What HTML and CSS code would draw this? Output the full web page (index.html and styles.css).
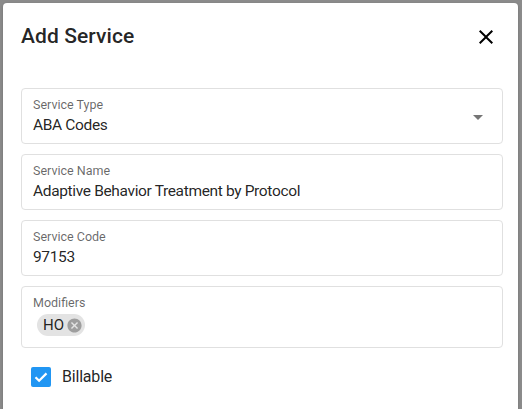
FILE: index.html
```html
<!DOCTYPE html>
<html lang="en">
<head>
<meta charset="utf-8">
<title>Add Service</title>
<link rel="stylesheet" href="styles.css">
</head>
<body>
<div class="dialog">
  <div class="header">
    <h2 class="title">Add Service</h2>
    <button class="close" aria-label="Close">
      <svg viewBox="0 0 24 24" width="24" height="24"><path d="M19 6.41 17.59 5 12 10.59 6.41 5 5 6.41 10.59 12 5 17.59 6.41 19 12 13.41 17.59 19 19 17.59 13.41 12z" fill="#000"/></svg>
    </button>
  </div>
  <div class="fields">
    <div class="field select">
      <div class="field-body">
        <div class="label">Service Type</div>
        <div class="value">ABA Codes</div>
      </div>
      <svg class="arrow" viewBox="0 0 10 5" width="10" height="5"><path d="M0 0h10L5 5z" fill="#757575"/></svg>
    </div>
    <div class="field">
      <div class="field-body">
        <div class="label">Service Name</div>
        <div class="value">Adaptive Behavior Treatment by Protocol</div>
      </div>
    </div>
    <div class="field">
      <div class="field-body">
        <div class="label">Service Code</div>
        <div class="value">97153</div>
      </div>
    </div>
    <div class="field modifiers">
      <div class="field-body">
        <div class="label">Modifiers</div>
        <div class="chips">
          <span class="chip">HO
            <svg class="chip-del" viewBox="0 0 24 24" width="17" height="17"><path d="M12 2C6.470 2 2 6.47 2 12s4.47 10 10 10 10-4.47 10-10S17.53 2 12 2zm5 13.59L15.590 17 12 13.41 8.41 17 7 15.59 10.59 12 7 8.41 8.41 7 12 10.59 15.59 7 17 8.41 13.41 12 17 15.59z" fill="#9e9e9e"/></svg>
          </span>
        </div>
      </div>
    </div>
    <label class="check-row">
      <span class="checkbox">
        <svg viewBox="0 0 20 20" width="20" height="20"><path d="M4.5 10.2l3.6 3.6 7.4-7.4" fill="none" stroke="#fff" stroke-width="2.2"/></svg>
      </span>
      <span class="check-label">Billable</span>
    </label>
  </div>
</div>
</body>
</html>
```
FILE: styles.css
```css
html, body {
  margin: 0;
  padding: 0;
  height: 100%;
  overflow: hidden;
}
body {
  background: #8b8b8b;
  font-family: Roboto, "Liberation Sans", Arial, sans-serif;
  color: rgba(0, 0, 0, 0.87);
  padding: 3px 4px 0 3px;
  box-sizing: border-box;
}
.dialog {
  background: #fff;
  border-radius: 4px;
  height: 420px;
  padding: 0 15px 0 18px;
  box-shadow: 0 1px 3px rgba(0,0,0,0.2);
}
.header {
  display: flex;
  align-items: center;
  justify-content: space-between;
  padding-top: 17px;
  height: 32px;
}
.title {
  margin: 0;
  font-size: 21px;
  font-weight: 500;
  line-height: 32px;
  letter-spacing: 0.1px;
}
.close {
  border: 0;
  background: none;
  padding: 0;
  width: 24px;
  height: 24px;
  margin-right: 5px;
  margin-top: 1px;
  display: flex;
}
.fields {
  margin-top: 36px;
  display: flex;
  flex-direction: column;
  gap: 10px;
}
.field {
  border: 1px solid #e0e0e0;
  border-radius: 4px;
  height: 56px;
  box-sizing: border-box;
  padding: 8px 12px 6px 11px;
  display: flex;
  align-items: center;
}
.field-body {
  flex: 1;
  align-self: flex-start;
}
.label {
  font-size: 12.5px;
  line-height: 16px;
  color: rgba(0, 0, 0, 0.6);
}
.value {
  font-size: 15.5px;
  line-height: 24px;
  letter-spacing: -0.35px;
}
.arrow {
  margin-right: 7px;
  margin-top: 1px;
}
.modifiers {
  height: 62px;
}
.chips {
  margin-top: 3px;
  display: flex;
  padding-left: 4px;
}
.chip {
  display: inline-flex;
  align-items: center;
  height: 22px;
  background: #e3e3e3;
  border-radius: 11px;
  padding: 0 2px 0 6px;
  font-size: 15px;
  gap: 2px;
}
.check-row {
  display: flex;
  align-items: center;
  margin-top: 8px;
  padding-left: 10px;
  gap: 11px;
}
.checkbox {
  width: 20px;
  height: 20px;
  background: #2196f3;
  border-radius: 2px;
  display: flex;
}
.check-label {
  font-size: 16px;
  line-height: 22px;
  letter-spacing: -0.2px;
}
```
